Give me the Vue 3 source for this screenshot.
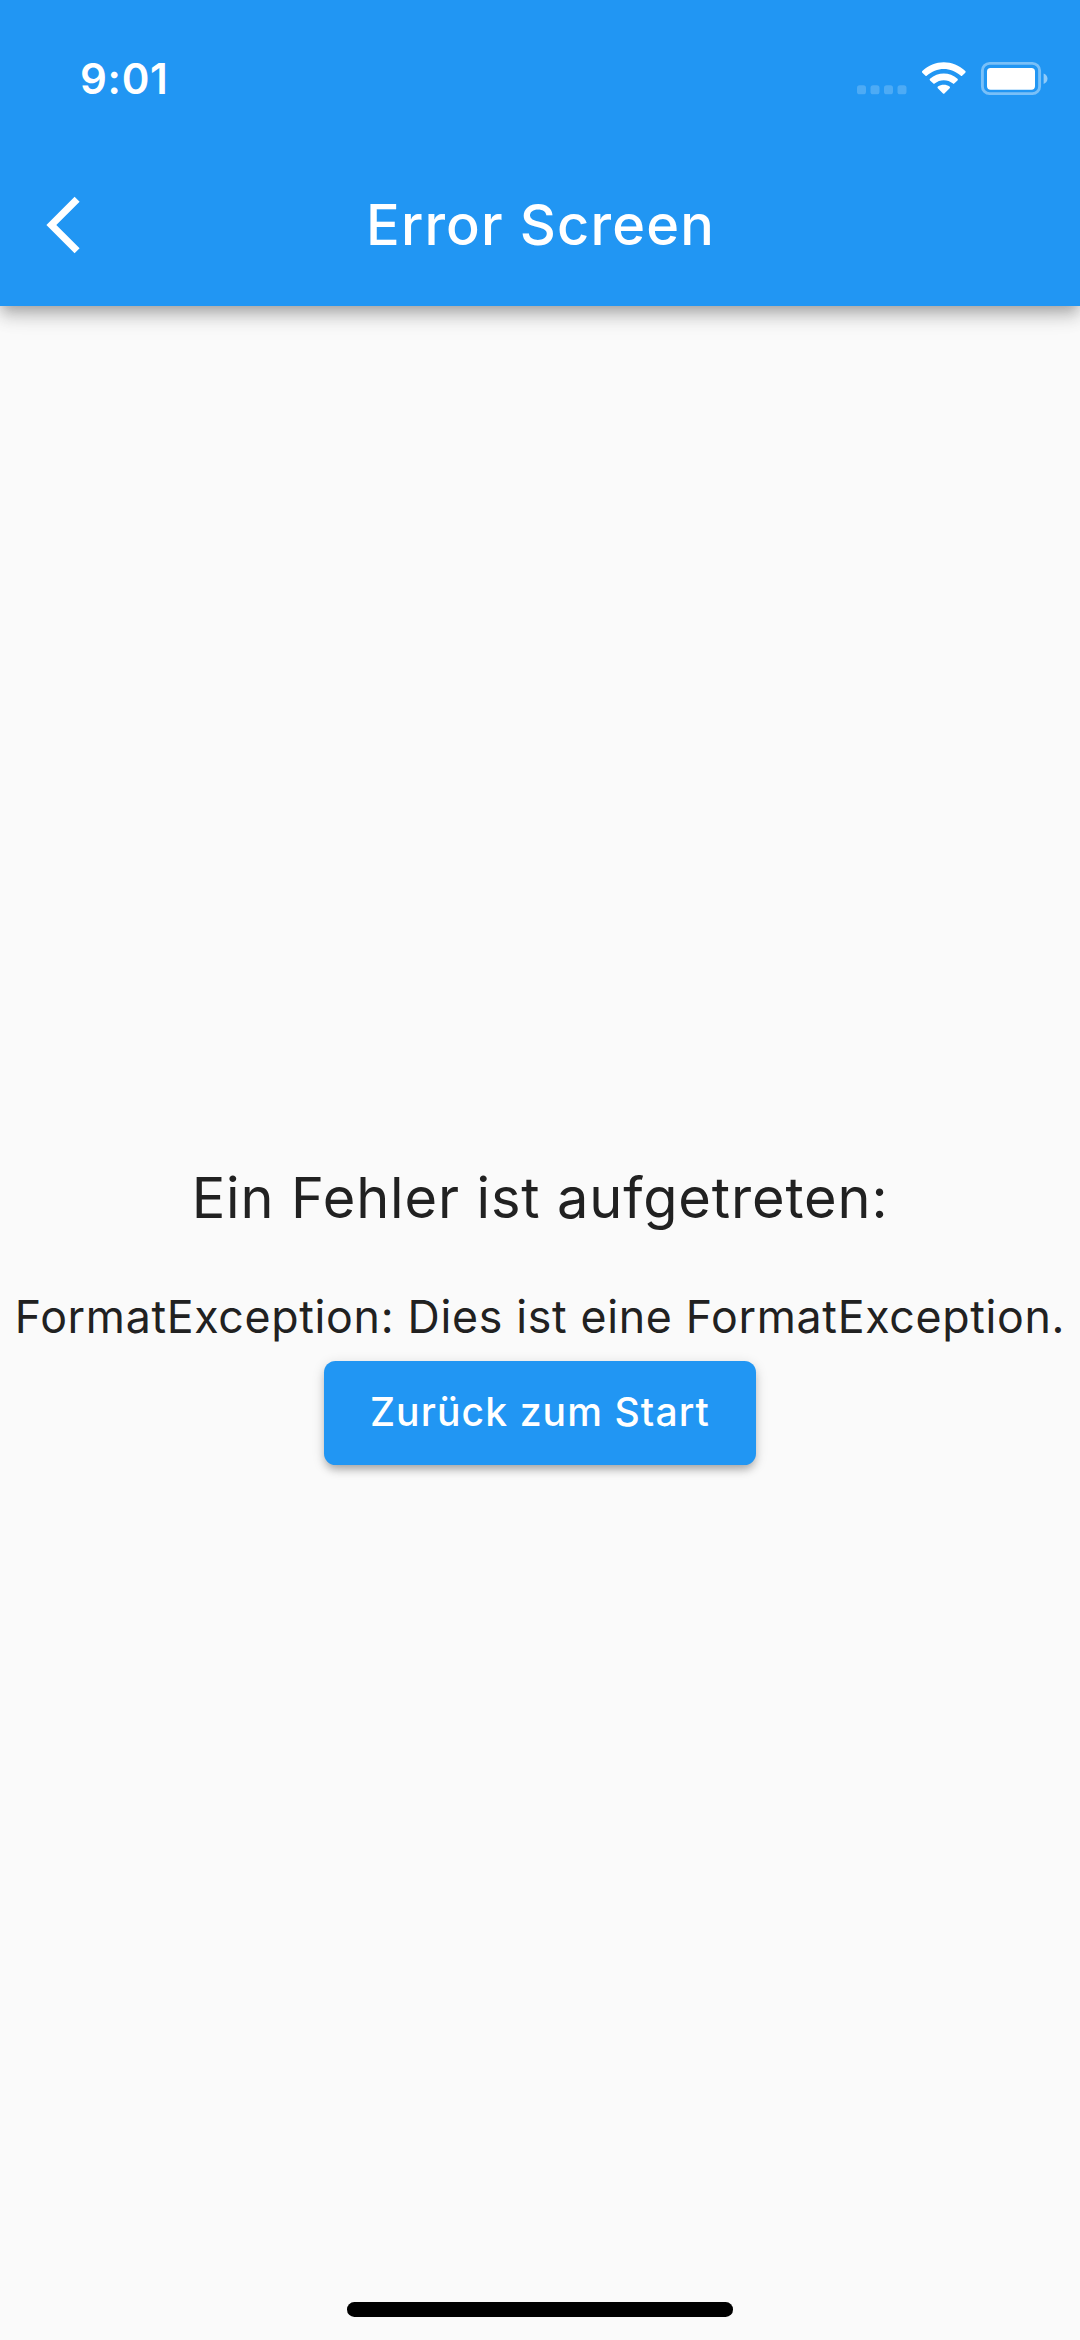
<script setup>
const signalDots = [0, 13.5, 27, 40.5]
</script>

<template>
  <div class="screen">
    <header class="app-bar">
      <div class="status-bar">
        <span class="time">9:01</span>
        <svg class="status-icons" width="200" height="40" viewBox="850 58 200 40" aria-hidden="true">
          <rect v-for="x in signalDots" :key="x" :x="857 + x" y="85.3" width="9" height="9" rx="2.6" fill="#fff" fill-opacity=".2" />
          <g fill="#fff">
            <path d="M922.3 72.7Q921.5 71.9 922.3 71.1C934.3 59.2 953.3 59.2 965.3 71.1Q966.1 71.9 965.3 72.7L962.1 75.8Q961.5 76.4 960.9 75.8C951 66.6 936.5 66.6 926.7 75.8Q926.1 76.4 925.5 75.8Z" />
            <path d="M930 80.4Q929.2 79.6 930 78.8C937.9 71.6 949.7 71.6 957.5 78.8Q958.3 79.6 957.5 80.4L954.2 83.6Q953.6 84.2 953 83.6C947.7 79 939.9 79 934.6 83.6Q934 84.2 933.4 83.6Z" />
            <path d="M937.8 88.2Q937 87.4 937.9 86.6C941.4 84 946.2 84 949.6 86.6Q950.5 87.4 949.7 88.2L944.4 93.5Q943.7 94.1 943 93.5Z" />
            <rect x="987" y="68" width="48" height="21.7" rx="3.6" />
            <path d="M1043.6 73.6C1045.9 74.5 1047.5 76.4 1047.5 78.8S1045.9 83.1 1043.6 84Z" fill-opacity=".5" />
          </g>
          <rect x="982.4" y="63.4" width="57.2" height="30.2" rx="7.2" fill="none" stroke="#fff" stroke-opacity=".4" stroke-width="2.9" />
        </svg>
      </div>
      <div class="toolbar">
        <button class="back" aria-label="Zurück">
          <svg width="34" height="58" viewBox="0 0 34 58"><path d="M.4 29 28.6.7 33.6 5.7 10.3 29 33.6 52.3 28.6 57.3Z" fill="#fff" /></svg>
        </button>
        <h1 class="title">Error Screen</h1>
      </div>
    </header>
    <main class="content">
      <h2 class="heading">Ein Fehler ist aufgetreten:</h2>
      <p class="message">FormatException: Dies ist eine FormatException.</p>
      <button class="action">Zurück zum Start</button>
    </main>
    <footer class="home-area"><div class="home-indicator"></div></footer>
  </div>
</template>

<style>
body {
  background: #fafafa;
}
</style>

<style scoped>
.screen {
  display: flex;
  flex-direction: column;
  width: 1080px;
  height: 2340px;
  overflow: hidden;
  background: #fafafa;
  color: #212121;
  font-family: Inter, "Liberation Sans", sans-serif;
}

h1, h2, p {
  margin: 0;
  font-weight: 400;
  white-space: nowrap;
}

button {
  border: 0;
  padding: 0;
  font: inherit;
  color: #fff;
  background: none;
}

.app-bar {
  flex: none;
  box-sizing: border-box;
  height: 305.6px;
  background: #2196f3;
  color: #fff;
  box-shadow: 0 5.8px 11.5px -2.9px rgba(0, 0, 0, .2), 0 11.5px 14.4px rgba(0, 0, 0, .14), 0 2.9px 28.8px rgba(0, 0, 0, .12);
}

.status-bar {
  display: flex;
  justify-content: space-between;
  align-items: flex-start;
  box-sizing: border-box;
  height: 144px;
  padding: 58px 30px 0 80px;
}

.time {
  font-size: 42px;
  font-weight: 600;
  line-height: 42px;
  letter-spacing: .7px;
}

.toolbar {
  display: grid;
  grid-template-columns: 160px 1fr 160px;
  align-items: center;
  height: 161px;
}

.back {
  display: flex;
  padding-left: 46px;
}

.title {
  text-align: center;
  font-size: 55.9px;
  font-weight: 450;
  line-height: 70px;
  letter-spacing: 1.15px;
  padding-left: 1px;
}

.content {
  flex: 1;
  display: flex;
  flex-direction: column;
  align-items: center;
  padding-top: 857px;
}

.heading {
  font-size: 55.9px;
  line-height: 70px;
  letter-spacing: .88px;
}

.message {
  margin-top: 54.7px;
  font-size: 44.7px;
  line-height: 60px;
  letter-spacing: .68px;
}

.action {
  width: 432px;
  height: 103.7px;
  margin-top: 13.8px;
  padding-bottom: 2px;
  border-radius: 11.5px;
  background: #2196f3;
  font-size: 39.1px;
  font-weight: 450;
  line-height: 50px;
  letter-spacing: 1.1px;
  box-shadow: 0 6px 9px -2px rgba(0, 0, 0, .26), 0 3px 13px rgba(0, 0, 0, .14);
}

.home-area {
  display: flex;
  justify-content: center;
  padding-bottom: 23px;
}

.home-indicator {
  width: 386px;
  height: 14.6px;
  border-radius: 7.3px;
  background: #000;
}
</style>
